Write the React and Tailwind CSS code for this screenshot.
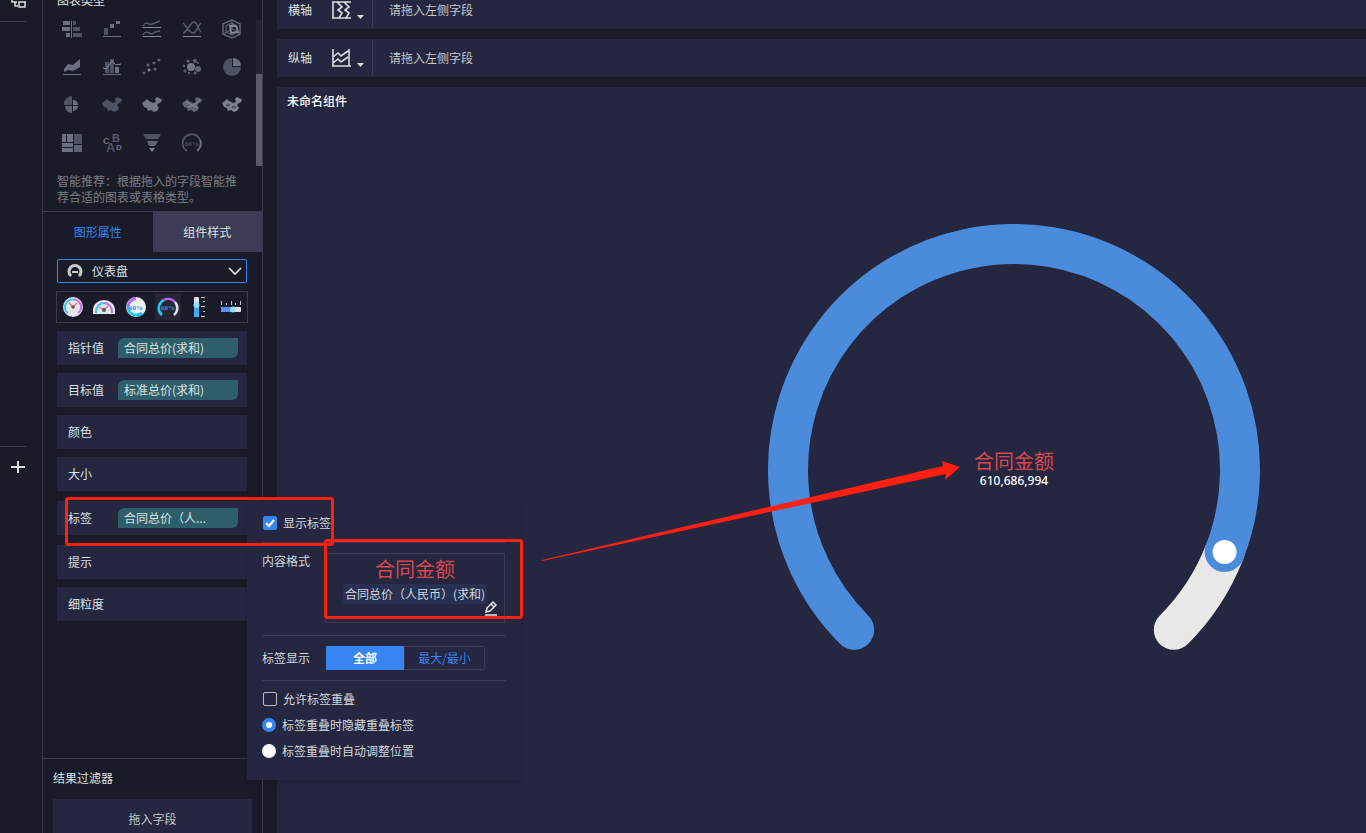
const CHINA =
  'M0 8 L3 6 L5 4 L7 6 L11 8 L14 7 L13 4 L15 2 L17 3 L20 4 L19 7 L17 8 L15 10 L17 13 L15 16 L12 17 L9 15 L6 16 L5 13 L2 12 Z';

const CHART_TYPES = [
  {
    name: '对比柱状图',
    art: (
      <>
        <path fill="#6b7080" d="M1 2h7v4h-7z M0 8h8v4h-8z M4 14h4v4h-4z M9 2h1v17h-1z" />
        <path fill="#4e5363" d="M11 2h3v4h-3z M11 8h7v4h-7z M11 14h9v4h-9z" />
      </>
    ),
  },
  {
    name: '瀑布图',
    art: (
      <>
        <path fill="#4e5363" d="M2 9h4v7h-4z" />
        <path fill="#6b7080" d="M8 5h4v4h-4z M14 2h4v3h-4z M1 17h18v1h-18z" />
      </>
    ),
  },
  {
    name: '分组折线图',
    art: (
      <>
        <path fill="none" stroke="#565b6c" strokeWidth="1.5" d="M1 7C3 3 5 4 7 5S11 5 13 4L18 2 M1 16C3 12 5 13 7 14S11 15 13 13L18 12" />
        <path fill="#858997" d="M1 8h18v1h-18z M1 17h18v1h-18z" />
      </>
    ),
  },
  {
    name: '折线图',
    art: (
      <>
        <path fill="none" stroke="#565b6c" strokeWidth="1.5" d="M1 4C4 6 7 14 11 14S15 7 19 4 M1 14C5 14 8 3 12 3S15 10 19 13" />
        <path fill="#858997" d="M1 17h18v1h-18z" />
      </>
    ),
  },
  {
    name: '雷达图',
    art: (
      <>
        <path fill="none" stroke="#6b7080" strokeWidth="1.3" d="M10 1L18 5V15L10 19L1 15V5Z" />
        <path fill="none" stroke="#5f6474" strokeWidth="1.2" d="M10 4L15 7V13L10 16L4 13V7Z M10 1V10L18 15 M10 10L1 15" />
        <path fill="none" stroke="#858997" strokeWidth="1.8" d="M8 7L14 7L16 13L9 14Z" />
      </>
    ),
  },
  {
    name: '面积图',
    art: <path fill="#6b7080" d="M2 12L6 7L11 8L18 2V10L11 14L6 13L2 15Z M1 17h18v1h-18z" />,
  },
  {
    name: '组合图',
    art: (
      <>
        <path fill="#4e5363" d="M3 5h4v11h-4z M8 2h4v14h-4z" />
        <path fill="#6b7080" d="M13 10h4v6h-4z M1 17h18v1h-18z" />
        <path fill="none" stroke="#858997" d="M1 11L4 12L10 4L14 8L19 7" />
      </>
    ),
  },
  {
    name: '散点图',
    art: (
      <g fill="#5f6474">
        <circle cx="2" cy="16" r="1.5" />
        <circle cx="7" cy="13" r="1.5" fill="#858997" />
        <circle cx="13" cy="12" r="1.5" />
        <circle cx="6" cy="8" r="1.5" />
        <circle cx="12" cy="6" r="1.5" />
        <circle cx="17" cy="3" r="1.5" />
      </g>
    ),
  },
  {
    name: '气泡图',
    art: (
      <g fill="#5f6474">
        <circle cx="9" cy="10" r="4" fill="#737786" />
        <circle cx="16" cy="12" r="3" />
        <circle cx="13" cy="4" r="2" />
        <circle cx="6" cy="4" r="1.6" />
        <circle cx="2" cy="9" r="1.2" />
        <circle cx="3" cy="14" r="1.8" fill="#4e5363" />
        <circle cx="7" cy="16" r="1.2" />
        <circle cx="13" cy="16" r="1.5" />
        <circle cx="16" cy="6" r="1" />
      </g>
    ),
  },
  {
    name: '饼图',
    art: (
      <>
        <path fill="#4e5363" d="M10 1A9 9 0 1 0 19 10H10Z" />
        <path fill="#6b7080" d="M11 1A8 8 0 0 1 19 9H11Z" />
      </>
    ),
  },
  {
    name: '玫瑰图',
    art: (
      <>
        <path fill="#4e5363" d="M10 10H2A8 8 0 0 1 10 1Z" />
        <path fill="#5f6474" d="M10 11V18A7 7 0 0 1 3 11Z" />
        <path fill="#6b7080" d="M11 10V5A5 5 0 0 1 16 10Z M11 11H16A5 5 0 0 1 11 16Z" />
      </>
    ),
  },
  { name: '区域地图', art: <path fill="#4e5363" d={CHINA} /> },
  { name: '点地图', art: <path fill="#737786" d={CHINA} /> },
  {
    name: '流向地图',
    art: (
      <>
        <path fill="#5f6474" d={CHINA} />
        <path fill="none" stroke="#8b8f9c" d="M4 7L16 13 M6 12L12 10L18 5" />
      </>
    ),
  },
  {
    name: '热力地图',
    art: (
      <>
        <path fill="#7d818f" d={CHINA} />
        <ellipse cx="6" cy="10" rx="2" ry="1.5" fill="#4e5363" />
        <ellipse cx="12" cy="12" rx="2.5" ry="1.5" fill="#4e5363" />
      </>
    ),
  },
  {
    name: '矩形树图',
    art: (
      <>
        <path fill="#6b7080" d="M0 1h4v8h-4z M5 1h6v8h-6z M0 10h11v4h-11z M0 15h11v4h-11z" />
        <path fill="#4e5363" d="M12 1h8v10h-8z" />
        <path fill="#5f6474" d="M12 12h8v7h-8z" />
      </>
    ),
  },
  {
    name: '词云',
    art: (
      <g fontFamily="Liberation Sans, sans-serif" fontWeight="bold">
        <text x="1" y="11" fontSize="9" fill="#6b7080">C</text>
        <text x="10" y="9" fontSize="11" fill="#565b6c">B</text>
        <text x="4" y="19" fontSize="13" fill="#4e5363">A</text>
        <text x="14" y="17" fontSize="8" fill="#737786">D</text>
      </g>
    ),
  },
  {
    name: '漏斗图',
    art: (
      <>
        <path fill="#4e5363" d="M1 1H19L16 6H4Z" />
        <path fill="#5f6474" d="M5 8H16L13 13H7Z" />
        <path fill="#858997" d="M7 15H13L10 19Z" />
      </>
    ),
  },
  {
    name: '仪表盘',
    art: (
      <>
        <path fill="none" stroke="#4e5363" strokeWidth="2" d="M5 18A9 9 0 1 1 18 7" />
        <path fill="none" stroke="#6b7080" strokeWidth="2" d="M18 7A9 9 0 0 1 15 18" />
        <text x="10" y="13" fontSize="7" fontWeight="bold" textAnchor="middle" fill="#4e5363" fontFamily="Liberation Serif, serif">60%</text>
      </>
    ),
  },
];

const GAUGE_STYLES = [
  {
    name: '多指针仪表盘',
    art: (
      <>
        <circle cx="11" cy="11" r="10" fill="#e6e6ec" />
        <path fill="none" stroke="#3cc8f5" strokeWidth="2" d="M6 17A7.5 7.5 0 0 1 11 3.5" />
        <path fill="none" stroke="#c77af0" strokeWidth="2" d="M11 3.5A7.5 7.5 0 0 1 16 17" />
        <path fill="none" stroke="#e86a6a" strokeWidth="1.2" d="M7 7L11 11L15 7" />
        <circle cx="11" cy="11" r="1.8" fill="#555a68" />
      </>
    ),
  },
  {
    name: '半圆仪表盘',
    art: (
      <>
        <path fill="#e6e6ec" d="M0 18V14A11 10 0 0 1 22 14V18Z" />
        <path fill="none" stroke="#3cc8f5" strokeWidth="2" d="M3 17A8 9 0 0 1 11 7" />
        <path fill="none" stroke="#b87af0" strokeWidth="2" d="M11 7A8 9 0 0 1 19 17" />
        <path fill="none" stroke="#e86a6a" strokeWidth="1.2" d="M6 11L11 14L15 10" />
        <circle cx="11" cy="14" r="2" fill="#555a68" />
      </>
    ),
  },
  {
    name: '百分比圆环',
    art: (
      <>
        <circle cx="11" cy="11" r="10" fill="#eef0f4" />
        <path fill="none" stroke="#29c6fa" strokeWidth="3" d="M17 17A8.5 8.5 0 0 1 3 11" />
        <path fill="none" stroke="#b765f2" strokeWidth="3" d="M3 11A8.5 8.5 0 0 1 11 2.5" />
        <text x="11" y="14" fontSize="7" fontWeight="bold" textAnchor="middle" fill="#3d8fdc" fontFamily="Liberation Serif, serif">60%</text>
      </>
    ),
  },
  {
    name: '百分比刻度槽',
    active: true,
    art: (
      <>
        <path fill="none" stroke="#29c6fa" strokeWidth="2.5" d="M5 19A9 9 0 0 1 7 4" />
        <path fill="none" stroke="#b765f2" strokeWidth="2.5" d="M7 4A9 9 0 0 1 18 6" />
        <path fill="none" stroke="#dedee6" strokeWidth="2.5" d="M18 6A9 9 0 0 1 17 19" />
        <text x="11" y="14" fontSize="7" fontWeight="bold" textAnchor="middle" fill="#3d8fdc" fontFamily="Liberation Serif, serif">60%</text>
      </>
    ),
  },
  {
    name: '垂直试管型',
    art: (
      <>
        <rect x="6" y="1" width="5" height="20" rx="1" fill="#dedee6" />
        <rect x="6" y="9" width="5" height="12" rx="1" fill="#3fa9f5" />
        <circle cx="8.5" cy="9" r="3" fill="#8fe0ff" />
        <path fill="#c4c5cc" d="M13 1h4v1h-4z M15 5h2v1h-2z M13 10h4v1h-4z M15 15h2v1h-2z M13 20h4v1h-4z" />
      </>
    ),
  },
  {
    name: '水平试管型',
    art: (
      <>
        <rect x="1" y="11" width="20" height="5" rx="1" fill="#dedee6" />
        <rect x="1" y="11" width="12" height="5" rx="1" fill="#5a8df5" />
        <circle cx="13" cy="13.5" r="3" fill="#8fe0ff" />
        <path fill="#c4c5cc" d="M1 5h1v4h-1z M6 7h1v2h-1z M11 5h1v4h-1z M15 7h1v2h-1z M20 5h1v4h-1z" />
      </>
    ),
  },
];

const FIELD_GROUPS = [
  [
    { label: '指针值', value: '合同总价(求和)' },
    { label: '目标值', value: '标准总价(求和)' },
    { label: '颜色' },
    { label: '大小' },
  ],
  [{ label: '标签', value: '合同总价（人...' }],
  [{ label: '提示' }, { label: '细粒度' }],
];

function Rail() {
  return (
    <nav className="w-[43px] shrink-0 border-r border-[#3a3b52] flex flex-col">
      <div className="h-[22px] w-[27px] border-b border-[#3a3b52] flex justify-end">
        <svg width="16" height="10" fill="none" stroke="#d5e0dc" strokeWidth="1.5">
          <path d="M1 0V2H6 M4 2V6H7 M8 2V7H14V2Z M8 2H15" />
        </svg>
      </div>
      <div className="h-[425px] w-[27px] border-b border-[#3a3b52]" />
      <button aria-label="添加组件" className="w-9 h-10 flex items-center justify-center">
        <svg width="14" height="14" fill="#d5e0dc">
          <path d="M6 1h2v12h-2z M0 6h14v2h-14z" />
        </svg>
      </button>
    </nav>
  );
}

function FieldRow({ label, value }) {
  return (
    <div className="h-[34px] bg-[#252640] flex items-center pl-[11px] pr-[9px]">
      <span className="w-[50px] shrink-0">{label}</span>
      {value && (
        <button className="h-5 flex-1 px-[6px] bg-[#2d5e6a] rounded-tl-md rounded-br-md text-left whitespace-nowrap">
          {value}
        </button>
      )}
    </div>
  );
}

function Settings() {
  return (
    <aside className="relative w-[220px] shrink-0 border-r border-[#3a3b52] flex flex-col">
      <h2 className="-mt-2 h-4 pl-[14px]">图表类型</h2>

      <div className="flex justify-between pl-[9px]">
        <div className="grid grid-cols-5 auto-rows-[38px] w-[200px] pt-[2px]">
          {CHART_TYPES.map((type) => (
            <button key={type.name} aria-label={type.name} className="flex items-center justify-center">
              <svg width="20" height="20" viewBox="0 0 20 20">{type.art}</svg>
            </button>
          ))}
        </div>
        {/* Scrollbar */}
        <div className="w-[6px] mt-3 -mb-1 bg-[#232430] flex flex-col justify-end">
          <div className="h-[92px] bg-[#5b5c69]" />
        </div>
      </div>

      <p className="mt-[11px] px-[14px] pb-[6px] text-[#7c7d84] border-b border-[#3a3b52]">
        智能推荐：根据拖入的字段智能推荐合适的图表或表格类型。
      </p>

      <div className="grid grid-cols-2 h-10 shrink-0">
        <button className="text-[#3685f2]">图形属性</button>
        <button className="bg-[#3c3d54]">组件样式</button>
      </div>

      <div className="pl-[14px] pr-[15px] pt-[7px]">
        <div className="relative h-6">
          <select
            aria-label="图形类型"
            className="appearance-none w-full h-full pl-[34px] pb-px border border-[#3685f2] rounded-xs bg-transparent"
          >
            <option>仪表盘</option>
          </select>
          <svg className="absolute left-[10px] top-[5px] pointer-events-none" width="16" height="14" fill="none">
            <path stroke="#c3cdca" strokeWidth="3" d="M4 12A6 6 0 1 1 12 12" />
            <path stroke="#c3cdca" strokeWidth="2" d="M5 8H11" />
          </svg>
          <svg className="absolute right-[5px] top-2 pointer-events-none" width="14" height="9" fill="none">
            <path stroke="#dbe5e1" strokeWidth="1.7" d="M1 1L7 7L13 1" />
          </svg>
        </div>

        <div className="mt-2 -mx-px h-8 border border-[#3a3b52] flex items-center justify-around">
          {GAUGE_STYLES.map((style) => (
            <button
              key={style.name}
              aria-label={style.name}
              className={`size-[26px] flex items-center justify-center ${style.active ? 'bg-[#252633]' : ''}`}
            >
              <svg width="22" height="22" viewBox="0 0 22 22">{style.art}</svg>
            </button>
          ))}
        </div>

        <div className="mt-2 flex flex-col gap-[10px]">
          {FIELD_GROUPS.map((group, index) => (
            <div key={index} className="flex flex-col gap-2">
              {group.map((field) => (
                <FieldRow key={field.label} {...field} />
              ))}
            </div>
          ))}
        </div>
      </div>

      <section className="mt-auto h-[75px] shrink-0 overflow-hidden border-t border-[#3a3b52] px-[10px] pt-[11px]">
        <h2>结果过滤器</h2>
        <div className="mt-[13px] h-10 bg-[#252640] flex items-center justify-center text-[#c3c8cb]">拖入字段</div>
      </section>

      <LabelPopup />
    </aside>
  );
}

function Checkbox({ label, ...props }) {
  return (
    <label className="flex items-center gap-[6px] pl-px">
      <span className="relative size-[14px]">
        <input
          type="checkbox"
          className="peer block appearance-none size-[14px] rounded-xs border border-[#b9bcc4] checked:border-[#3685f2] checked:bg-[#3685f2]"
          {...props}
        />
        <svg className="absolute inset-0 pointer-events-none hidden peer-checked:block" width="14" height="14" fill="none">
          <path stroke="#fff" strokeWidth="2" d="M3 7L6 10L11 4" />
        </svg>
      </span>
      {label}
    </label>
  );
}

function Radio({ label, ...props }) {
  return (
    <label className="flex items-center gap-[6px]">
      <input
        type="radio"
        name="overlap"
        className="appearance-none size-[14px] rounded-full bg-white checked:border-4 checked:border-[#3685f2]"
        {...props}
      />
      {label}
    </label>
  );
}

function LabelPopup() {
  return (
    <div className="absolute z-10 left-[204px] top-[500px] w-[274px] rounded-xs bg-[#252640] shadow-md px-[15px] pt-[15px] pb-[21px] text-[#d3d8da]">
      <div className="pb-[11px] border-b border-[#3a3b52]">
        <Checkbox label="显示标签" defaultChecked />
      </div>

      <div className="flex gap-[15px] pt-[10px] pb-3 border-b border-[#3a3b52]">
        <span className="w-12">内容格式</span>
        <div className="relative w-[180px] h-[70px] border border-[#3a3b52] flex flex-col items-center pt-[3px]">
          <span className="text-xl leading-[24px] text-[#d9484c]">合同金额</span>
          <span className="mt-[3px] h-5 px-[2px] leading-5 rounded-xs bg-[#283153] whitespace-nowrap">
            合同总价（人民币）(求和)
          </span>
          <button aria-label="编辑" className="absolute right-[6px] bottom-[6px]">
            <svg width="14" height="16" fill="none" stroke="#e4e8e8" strokeWidth="1.5">
              <path d="M1 15H13 M2 12L3 8L9 2L12 5L6 11Z M7 4L10 7" />
            </svg>
          </button>
        </div>
      </div>

      <div className="flex items-center gap-4 py-[10px] border-b border-[#3a3b52]">
        <span className="w-12">标签显示</span>
        <div className="flex h-6">
          <button className="w-[78px] bg-[#3685f2] text-white font-bold">全部</button>
          <button className="w-[81px] border border-[#3a3b52] rounded-r-xs text-[#3685f2]">最大/最小</button>
        </div>
      </div>

      <div className="pt-[10px] flex flex-col gap-[10px]">
        <Checkbox label="允许标签重叠" />
        <Radio label="标签重叠时隐藏重叠标签" defaultChecked />
        <Radio label="标签重叠时自动调整位置" />
      </div>
    </div>
  );
}

function AxisBar({ label, icon }) {
  return (
    <div className="h-[38px] shrink-0 bg-[#252640] flex items-center pl-[11px]">
      <span className="w-[43px]">{label}</span>
      <button aria-label={`${label}设置`} className="flex items-end w-[41px]">
        <svg width="20" height="20" fill="none" stroke="#d5e0dc" strokeWidth="1.6">
          <path d={icon} />
        </svg>
        <svg className="ml-[6px]" width="8" height="6" fill="#d5e0dc">
          <path d="M0 1H7L3.5 5Z" />
        </svg>
      </button>
      <div className="h-9 border-l border-[#3a3b52] pl-4 flex items-center text-[#c3c8cb]">请拖入左侧字段</div>
    </div>
  );
}

function Gauge() {
  return (
    <div className="relative size-[492px]">
      <svg viewBox="-246 -246 492 492" fill="none" strokeWidth="40" strokeLinecap="round">
        <path stroke="#e8e8e8" d="M210.6 82A226 226 0 0 1 159.8 159.8" />
        <path stroke="#4a8cdb" d="M-159.8 159.8A226 226 0 1 1 210.6 82" />
        <circle cx="210.6" cy="82" r="12" fill="#fff" />
      </svg>
      <div className="absolute inset-0 pb-[2px] flex flex-col items-center justify-center">
        <span className="text-xl leading-[24px] text-[#d9484c]">合同金额</span>
        <span className="text-white font-medium font-['Noto_Sans',sans-serif]">610,686,994</span>
      </div>
    </div>
  );
}

function Annotations() {
  return (
    <svg className="absolute z-20 left-0 top-0 pointer-events-none" width="1000" height="700">
      <g fill="none" stroke="#ff2012" strokeWidth="3">
        <rect x="66.5" y="498.5" width="266" height="46" rx="2" />
        <rect x="325.5" y="540.5" width="196" height="77" rx="2" />
      </g>
      <path fill="#ff2012" d="M542 560L943 466L942 461L960 467L945 480L946 474L542 561Z" />
    </svg>
  );
}

export default function App() {
  return (
    <div className="relative h-screen flex overflow-hidden bg-[#1a1b28] text-[#dbe2e2] text-xs leading-4 font-['Noto_Sans_CJK_SC',sans-serif]">
      <Rail />
      <Settings />
      <main className="flex-1 min-w-0 ml-[14px] -mt-[9px] flex flex-col gap-[10px]">
        <AxisBar label="横轴" icon="M2 2V18 M1 2H20 M1 18H20 M6 2L11 7L7 10L11 13L8 18 M13 2L18 7L14 10L18 13L15 18" />
        <AxisBar label="纵轴" icon="M2 1V18 M18 1V18 M1 18H20 M2 9L7 5L10 8L17 3 M2 15L7 11L10 14L17 9" />
        <section className="flex-1 bg-[#252640]">
          <h1 className="pl-[10px] pt-[6px] text-white font-medium">未命名组件</h1>
          <div className="pt-[115px] pl-[385px] flex justify-center">
            <Gauge />
          </div>
        </section>
      </main>
      <Annotations />
    </div>
  );
}
